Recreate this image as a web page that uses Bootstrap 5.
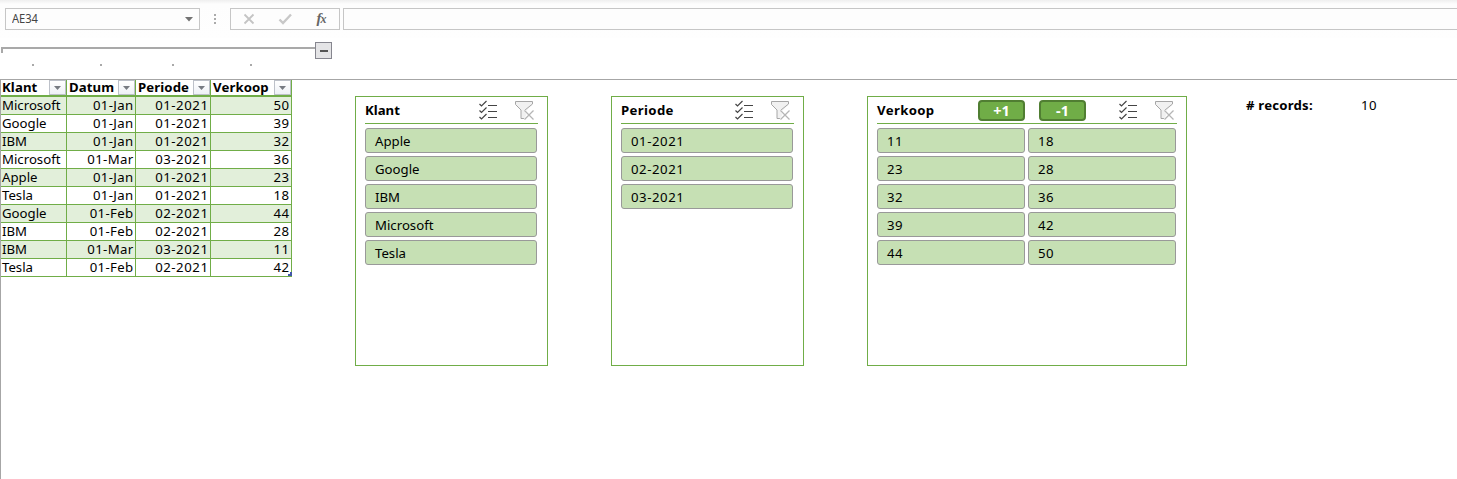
<!DOCTYPE html>
<html lang="nl">
<head>
<meta charset="utf-8">
<title>Verkoop</title>
<link rel="stylesheet" href="https://cdn.jsdelivr.net/npm/bootstrap@5.3.0/dist/css/bootstrap.min.css">
<style>
body{font-family:"Noto Sans","Open Sans",sans-serif;font-size:13.2px;line-height:17px;color:#000;background:#fff;height:479px;overflow:hidden}
svg{display:block;flex-shrink:0}
.formula-bar{height:38px;padding:8px 0 0 5px;background:linear-gradient(#efefef,#fdfdfd 4px,#fefefe)}
.fbox{height:22px;border:1px solid #c6c6c6;background:#fdfdfd}
.name-box{width:195px;padding:0 6px;color:#444;font-size:12.4px}
.name-text{display:inline-block;transform:scaleX(.9);transform-origin:left;letter-spacing:-.1px;margin-top:-1px}
.grip{width:30px;height:22px;display:flex;justify-content:center}
.outline-bar{height:41px}
.outline-line{width:314px;height:6px;margin:9px 0 0 1px;border-top:2px solid #a9a9a9;border-left:2px solid #a9a9a9}
.outline-btn{width:17px;height:17px;margin-top:4px;border:1px solid #86868f;background:#e4e4e6}
.outline-dots{height:2px;margin-top:5px;position:relative}
.outline-dots i{position:absolute;width:2px;height:2px;background:#a9a9a9}
.sheet{height:400px;border-top:1px solid #a6a6a6;border-left:1px solid #a6a6a6}
.grid-table{width:291px;table-layout:fixed;border-collapse:separate;border-spacing:0;height:197px}
.grid-table th,.grid-table td{padding:0 1.5px 0 1px;border-right:1px solid #70ad47;border-bottom:1px solid #70ad47;height:18px;white-space:nowrap;line-height:17px;text-align:right}
.grid-table th{height:17px;border-bottom-width:2px;text-align:left;padding:0;line-height:15px;letter-spacing:.1px}
.grid-table td:nth-child(1){text-align:left}
.grid-table td:nth-child(2){letter-spacing:.35px}
.grid-table td:nth-child(3){letter-spacing:.55px}
.grid-table td:nth-child(4){letter-spacing:.4px}
.grid-table tbody tr:nth-child(odd) td{background:#e2efda}
.grid-table th>div{height:15px;padding-left:2px}
.grid-table th:first-child>div{padding-left:1px}
.filter-btn{width:17px;height:15px;border:1px solid #bdc1c9;background:linear-gradient(#fff,#eef1f6);display:flex;align-items:center;justify-content:center}
.corner-cell{position:relative}
.corner-cell:after{content:"";position:absolute;right:-1px;bottom:0;width:4px;height:4px;background:#4257a8;clip-path:polygon(50% 0,100% 0,100% 100%,0 100%,0 50%,50% 50%)}
.slicer{height:270px;margin-top:16px;border:1px solid #70ad47;padding:0 9px;width:193px;background:#fff}
.slicer-wide{width:320px}
.slicer-wide .tools{margin-right:-1px}
.slicer-head{height:27px;border-bottom:1px solid #70ad47;display:flex;align-items:center;font-weight:700}
.slicer-name{letter-spacing:.35px}
.slicer-items{display:grid;gap:3px;padding-top:4px;width:172px}
.slicer-wide .slicer-items{grid-template-columns:148px 148px;width:299px}
.slicer-item{height:25px;border:1px solid #999;border-radius:3px;background:#c6e0b4;padding:0 9px;line-height:24px;text-align:left;color:#000;font-size:13.2px}
.slicer-digits .slicer-item{letter-spacing:.55px}
.step-btn{width:47px;height:21px;border:2px solid #507e32;border-radius:4px;background:#70ad47;color:#fff;font-weight:700;font-size:14.5px;line-height:17px;text-align:center;padding:0 0 1px}
</style>
</head>
<body>
<div class="formula-bar d-flex">
  <div class="fbox name-box d-flex align-items-center justify-content-between"><span class="name-text">AE34</span>
    <svg width="8" height="5"><path d="M0 0h8L4 4.5z" fill="#737373"/></svg></div>
  <div class="grip align-items-center"><svg width="2" height="11"><path d="M0 0h2v2H0zM0 4h2v2H0zM0 8h2v2H0z" fill="#ababab"/></svg></div>
  <div class="fbox d-flex align-items-center" style="width:110px">
    <svg width="108" height="20"><path d="M13.5 5.5l9 9M22.500 5.500l-9 9" stroke="#c4c4c4" stroke-width="1.8"/><path d="M48.500 10.500l3.500 3.500 8-8.500" fill="none" stroke="#c8c8c8" stroke-width="2.400"/><text x="85.500" y="13.500" font-family="Liberation Serif,serif" font-style="italic" font-weight="bold" font-size="15" fill="#666">f</text><text x="89.500" y="14" font-family="Liberation Serif,serif" font-style="italic" font-weight="bold" font-size="12" fill="#666">x</text></svg>
  </div>
  <div class="fbox flex-grow-1 border-end-0" style="margin-left:3px"></div>
</div>
<div class="outline-bar">
  <div class="d-flex"><div class="outline-line"></div><div class="outline-btn d-flex align-items-center justify-content-center"><svg width="8" height="2"><path d="M0 0h8v2H0z" fill="#555"/></svg></div></div>
  <div class="outline-dots"><i style="left:32px"></i><i style="left:100px"></i><i style="left:172px"></i><i style="left:250px"></i></div>
</div>
<main class="sheet d-flex align-items-start">
  <table class="grid-table">
    <colgroup><col style="width:66px"><col style="width:69px"><col style="width:75px"><col style="width:81px"></colgroup>
    <thead><tr id="heads"></tr></thead>
    <tbody id="rows"></tbody>
  </table>
  <section class="slicer" style="margin-left:63px"><div class="slicer-head"><span class="slicer-name me-auto" style="letter-spacing:0">Klant</span><span class="tools"></span></div><div class="slicer-items" data-items="Apple,Google,IBM,Microsoft,Tesla"></div></section>
  <section class="slicer" style="margin-left:63px"><div class="slicer-head"><span class="slicer-name me-auto">Periode</span><span class="tools"></span></div><div class="slicer-items slicer-digits" data-items="01-2021,02-2021,03-2021"></div></section>
  <section class="slicer slicer-wide" style="margin-left:63px"><div class="slicer-head"><span class="slicer-name me-auto">Verkoop</span><button class="step-btn">+1</button><button class="step-btn" style="margin:0 32px 0 14px">-1</button><span class="tools"></span></div><div class="slicer-items slicer-digits" data-items="11,18,23,28,32,36,39,42,44,50"></div></section>
  <div class="d-flex" style="margin:17px 0 0 59px"><b style="width:115px;letter-spacing:.2px">#&nbsp;records:</b><span style="letter-spacing:.4px">10</span></div>
</main>
<script>
document.getElementById('heads').innerHTML=['Klant','Datum','Periode','Verkoop'].map(h=>`<th><div class="d-flex justify-content-between"><span>${h}</span><span class="filter-btn"><svg width="7" height="4"><path d="M0 0h7L3.500 4z" fill="#777b82"/></svg></span></div></th>`).join('');
const data=[['Microsoft','01-Jan','01-2021',50],['Google','01-Jan','01-2021',39],['IBM','01-Jan','01-2021',32],['Microsoft','01-Mar','03-2021',36],['Apple','01-Jan','01-2021',23],['Tesla','01-Jan','01-2021',18],['Google','01-Feb','02-2021',44],['IBM','01-Feb','02-2021',28],['IBM','01-Mar','03-2021',11],['Tesla','01-Feb','02-2021',42]];
document.getElementById('rows').innerHTML=data.map((r,i)=>'<tr>'+r.map((c,j)=>`<td${i==9&&j==3?' class="corner-cell"':''}>${c}</td>`).join('')+'</tr>').join('');
document.querySelectorAll('.slicer-items').forEach(e=>e.innerHTML=e.dataset.items.split(',').map(t=>`<button class="slicer-item">${t}</button>`).join(''));
document.querySelectorAll('.tools').forEach(e=>e.innerHTML=`<svg width="60" height="22" fill="none"><path d="M1.500 5l2 2 5-5M1.500 11.500l2 2 5-5M1.500 18l2 2 5-5" stroke="#444" stroke-width="1.200"/><path d="M10 6.500h9M10 12.500h9M10 18.500h9" stroke="#444"/><path d="M37.500 2.500h17v3l-6 6v4l-2 4h-3.500v-8.500l-5.500-5.500z" fill="#f1f1f1"/><path d="M47 13v-2l7.500-6v-2.500h-17v3l5.500 5.500v8.500h3" stroke="#a6a6a6"/><path d="M46.500 11.500l9 9M55.500 11.500l-9 9" stroke="#fff" stroke-width="2.400"/><path d="M46.500 11.500l9 9M55.500 11.500l-9 9" stroke="#b5b5b5" stroke-width="1.300"/></svg>`);
</script>
<script src="https://cdn.jsdelivr.net/npm/bootstrap@5.3.0/dist/js/bootstrap.bundle.min.js"></script>
</body>
</html>
